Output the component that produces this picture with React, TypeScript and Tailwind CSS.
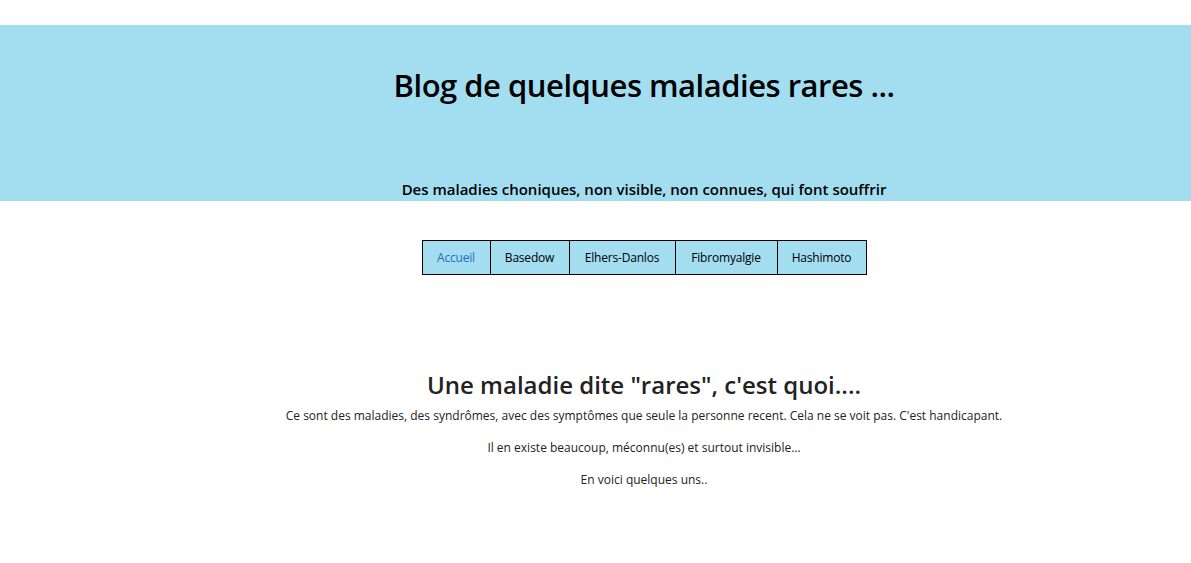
import React from "react";

const font = { fontFamily: '"Open Sans", "Noto Sans", sans-serif' };

export default function App() {
  const items = [
    { label: "Accueil", w: "w-[69px]", active: true },
    { label: "Basedow", w: "w-[80px]" },
    { label: "Elhers-Danlos", w: "w-[107px]" },
    { label: "Fibromyalgie", w: "w-[103px]" },
    { label: "Hashimoto", w: "w-[90px]" },
  ];
  return (
    <div className="min-h-[563px] bg-white pt-[25px]" style={font}>
      <header className="h-[176px] bg-[#a2ddf0] pl-[97px] flex flex-col items-center">
        <h1 className="mt-[40px] text-[31px] leading-[40px] font-semibold text-black tracking-[-0.5px]">
          Blog de quelques maladies rares ...
        </h1>
        <p className="mt-[74px] text-[15px] leading-[20px] font-semibold text-black tracking-[0px]">
          Des maladies choniques, non visible, non connues, qui font souffrir
        </p>
      </header>
      <nav className="pl-[97px] mt-[39px] flex justify-center">
        <ul className="flex">
          {items.map((it, i) => (
            <li
              key={it.label}
              className={`${it.w} h-[35px] flex items-center justify-center bg-[#a2ddf0] border border-black ${i > 0 ? "-ml-px" : ""} text-[12px] tracking-[-0.2px] ${it.active ? "text-[#2a6ebb]" : "text-black"}`}
            >
              {it.label}
            </li>
          ))}
        </ul>
      </nav>
      <main className="pl-[97px] mt-[94px] flex flex-col items-center text-[#222]">
        <h2 className="text-[24px] leading-[32px] font-semibold tracking-[0px]">
          Une maladie dite "rares", c'est quoi....
        </h2>
        <p className="mt-[7px] text-[12px] leading-[16px] tracking-[0px]">
          Ce sont des maladies, des syndrômes, avec des symptômes que seule la personne recent. Cela ne se voit pas. C'est handicapant.
        </p>
        <p className="mt-[16px] text-[12px] leading-[16px] tracking-[0px]">
          Il en existe beaucoup, méconnu(es) et surtout invisible...
        </p>
        <p className="mt-[16px] text-[12px] leading-[16px] tracking-[0px]">
          En voici quelques uns..
        </p>
      </main>
    </div>
  );
}
